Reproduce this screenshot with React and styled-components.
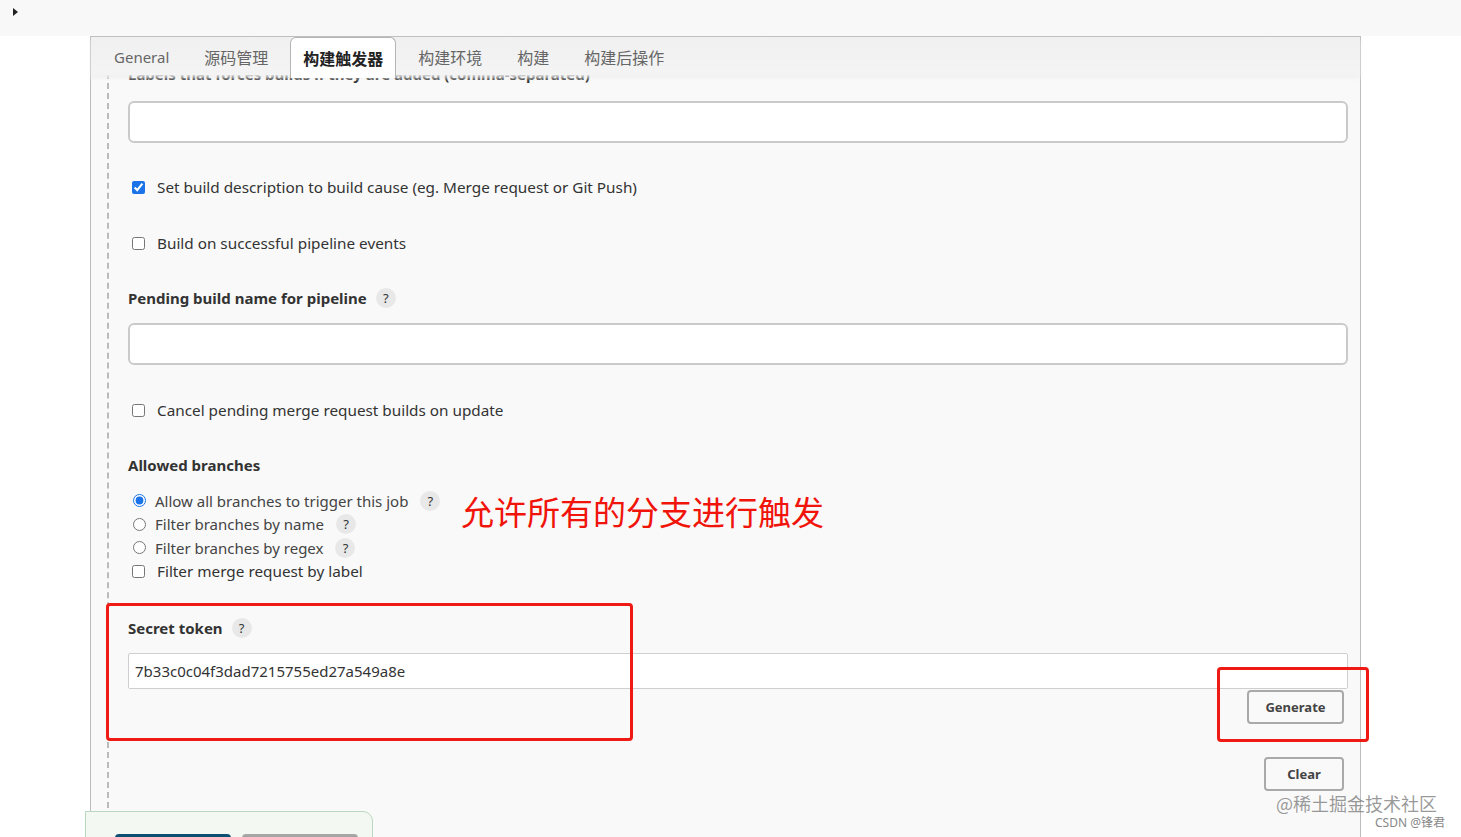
import React from 'react'
import styled, { createGlobalStyle } from 'styled-components'

const GlobalStyle = createGlobalStyle`
  html, body {
    margin: 0;
    padding: 0;
    background: #fff;
    height: 837px;
    overflow: hidden;
  }
  body {
    font-family: 'Noto Sans', 'Noto Sans CJK SC', sans-serif;
    color: #333;
  }
`

const Screen = styled.div`
  position: relative;
  width: 1461px;
  height: 837px;
  overflow: hidden;
`

const TopBar = styled.div`
  height: 36px;
  background: #f8f8f8;
  position: relative;
`

const Caret = styled.span`
  position: absolute;
  left: 13px;
  top: 8px;
  width: 0;
  height: 0;
  border-top: 4px solid transparent;
  border-bottom: 4px solid transparent;
  border-left: 5px solid #222;
`

const Panel = styled.div`
  margin-left: 90px;
  width: 1271px;
  height: 801px;
  background: #f9f9f9;
  border: 1px solid #bdbdbd;
  border-bottom: none;
  box-sizing: border-box;
  position: relative;
`

const TabBar = styled.div`
  position: relative;
  z-index: 2;
  display: flex;
  align-items: flex-start;
  gap: 9px;
  height: 38px;
  padding-left: 10px;
  background: linear-gradient(#f0f0f0, #f4f4f4);
  box-shadow: 0 3px 4px rgba(240, 240, 240, 0.9);
`

const Tab = styled.div`
  height: ${({ active }) => (active ? '41px' : '38px')};
  box-sizing: border-box;
  padding: 0 12px;
  display: flex;
  align-items: center;
  font-size: ${({ latin }) => (latin ? '15px' : '16px')};
  color: ${({ active }) => (active ? '#222' : '#666')};
  font-weight: ${({ active }) => (active ? 600 : 400)};
  background: ${({ active }) => (active ? '#fff' : 'transparent')};
  border: 1px solid ${({ active }) => (active ? '#b5b5b5' : 'transparent')};
  border-bottom: none;
  border-radius: 6px 6px 0 0;
  font-family: 'Noto Sans', 'Noto Sans CJK SC', sans-serif;
`

const Body = styled.div`
  display: flex;
  margin-left: 16px;
  height: 763px;
`

const Rail = styled.div`
  width: 0;
  border-left: 2px dashed #bbb;
  margin-top: -2px;
`

const Content = styled.div`
  flex: 1;
  padding: 0 12px 0 19px;
  position: relative;
`

const Label = styled.div`
  display: flex;
  align-items: center;
  gap: 9px;
  height: 20px;
  margin-top: ${({ mt }) => mt || 0}px;
  font-size: 15px;
  font-weight: 700;
  color: #333;
  white-space: nowrap;
`

/* the label above the first field is scrolled under the sticky tab bar */
const ScrolledOff = styled.div`
  height: 9px;
  overflow: hidden;
`

const Help = styled.span`
  display: inline-flex;
  align-items: center;
  justify-content: center;
  width: 20px;
  height: 20px;
  border-radius: 50%;
  background: #e8e8e8;
  color: #333;
  font-size: 13px;
  font-weight: 400;
  margin-left: ${({ ml }) => ml || 0}px;
`

const TextInput = styled.div`
  margin-top: ${({ mt }) => mt || 0}px;
  height: ${({ h }) => h || 42}px;
  box-sizing: border-box;
  background: #fff;
  border: ${({ thin }) => (thin ? '1px solid #cfcfcf' : '2px solid #cacaca')};
  border-radius: ${({ thin }) => (thin ? '2px' : '6px')};
  display: flex;
  align-items: center;
  padding-left: 6px;
  font-size: 15px;
  color: #333;
`

const CheckRow = styled.label`
  display: flex;
  align-items: center;
  height: ${({ h }) => h || 20}px;
  margin-top: ${({ mt }) => mt || 0}px;
  font-size: ${({ fs }) => fs || 15.3}px;
  color: #333;
  white-space: nowrap;
`

const Check = styled.input.attrs({ type: 'checkbox' })`
  width: 13px;
  height: 13px;
  margin: 0 12px 0 4px;
  accent-color: #1a73e8;
`

const Radio = styled.input.attrs({ type: 'radio' })`
  width: 13px;
  height: 13px;
  margin: 0 9px 0 5px;
  accent-color: #1a73e8;
`

const RadioText = styled.span`
  color: #444;
  font-weight: 400;
`

const Branches = styled.div`
  position: relative;
  margin-top: 14px;
`

const Note = styled.div`
  position: absolute;
  left: 333px;
  top: -2px;
  font-size: 33px;
  color: #f0140a;
  font-family: 'Noto Sans CJK SC', sans-serif;
  white-space: nowrap;
`

const Actions = styled.div`
  display: flex;
  flex-direction: column;
  align-items: flex-end;
  padding-right: 4px;
`

const Button = styled.button`
  margin-top: ${({ mt }) => mt || 0}px;
  width: ${({ w }) => w}px;
  height: 34px;
  background: #f9f9f9;
  border: 2px solid #a9a9a9;
  border-radius: 4px;
  font-family: 'Noto Sans', sans-serif;
  font-size: 13px;
  font-weight: 700;
  color: #444;
`

const Mark = styled.div`
  position: absolute;
  border: 3px solid #f01a14;
  border-radius: 4px;
  box-sizing: border-box;
  pointer-events: none;
`

const Footer = styled.div`
  position: absolute;
  left: 85px;
  top: 811px;
  width: 288px;
  height: 40px;
  box-sizing: border-box;
  border: 1px solid #b9d8c0;
  border-radius: 0 10px 0 0;
  background: #f3f8f2;
  display: flex;
  gap: 11px;
  padding: 22px 0 0 29px;
`

const FooterButton = styled.div`
  width: 116px;
  height: 10px;
  border-radius: 4px 4px 0 0;
  background: ${({ primary }) => (primary ? '#0b4f73' : '#a6a6a6')};
`

const Watermark = styled.div`
  position: absolute;
  right: 24px;
  top: 790px;
  font-size: 18px;
  color: rgba(120, 120, 120, 0.75);
  font-family: 'Noto Sans CJK SC', sans-serif;
  white-space: nowrap;
`

const SmallMark = styled.div`
  position: absolute;
  right: 16px;
  top: 813px;
  font-size: 12px;
  color: #888;
  font-family: 'Noto Sans', 'Noto Sans CJK SC', sans-serif;
`

const tabs = ['General', '源码管理', '构建触发器', '构建环境', '构建', '构建后操作']

const branches = [
  { text: 'Allow all branches to trigger this job', checked: true, gap: 12 },
  { text: 'Filter branches by name', gap: 12 },
  { text: 'Filter branches by regex', gap: 12 }
]

export default function App () {
  return (
    <Screen>
      <GlobalStyle />
      <TopBar>
        <Caret />
      </TopBar>
      <Panel>
        <TabBar>
          {tabs.map(t => (
            <Tab key={t} active={t === '构建触发器'} latin={t === 'General'}>
              {t}
            </Tab>
          ))}
        </TabBar>
        <Body>
          <Rail />
          <Content>
            <ScrolledOff>
              <Label mt={-11}>
                Labels that forces builds if they are added (comma-separated)
              </Label>
            </ScrolledOff>
            <TextInput mt={17} />
            <CheckRow mt={34}>
              <Check defaultChecked />
              Set build description to build cause (eg. Merge request or Git Push)
            </CheckRow>
            <CheckRow mt={36}>
              <Check />
              Build on successful pipeline events
            </CheckRow>
            <Label mt={35}>
              Pending build name for pipeline
              <Help>?</Help>
            </Label>
            <TextInput mt={15} />
            <CheckRow mt={35}>
              <Check />
              Cancel pending merge request builds on update
            </CheckRow>
            <Label mt={35}>Allowed branches</Label>
            <Branches>
              {branches.map(b => (
                <CheckRow key={b.text} h={23.5} fs={15}>
                  <Radio name='branches' defaultChecked={b.checked} />
                  <RadioText>{b.text}</RadioText>
                  <Help ml={b.gap}>?</Help>
                </CheckRow>
              ))}
              <CheckRow h={23.5}>
                <Check />
                Filter merge request by label
              </CheckRow>
              <Note>允许所有的分支进行触发</Note>
            </Branches>
            <Label mt={35}>
              Secret token
              <Help>?</Help>
            </Label>
            <TextInput mt={15} h={36} thin>
              7b33c0c04f3dad7215755ed27a549a8e
            </TextInput>
            <Actions>
              <Button w={97} mt={1}>Generate</Button>
              <Button w={80} mt={33}>Clear</Button>
            </Actions>
          </Content>
        </Body>
      </Panel>
      <Mark style={{ left: 106, top: 603, width: 527, height: 138 }} />
      <Mark style={{ left: 1217, top: 667, width: 152, height: 75 }} />
      <Footer>
        <FooterButton primary />
        <FooterButton />
      </Footer>
      <Watermark>@稀土掘金技术社区</Watermark>
      <SmallMark>CSDN @锋君</SmallMark>
    </Screen>
  )
}
